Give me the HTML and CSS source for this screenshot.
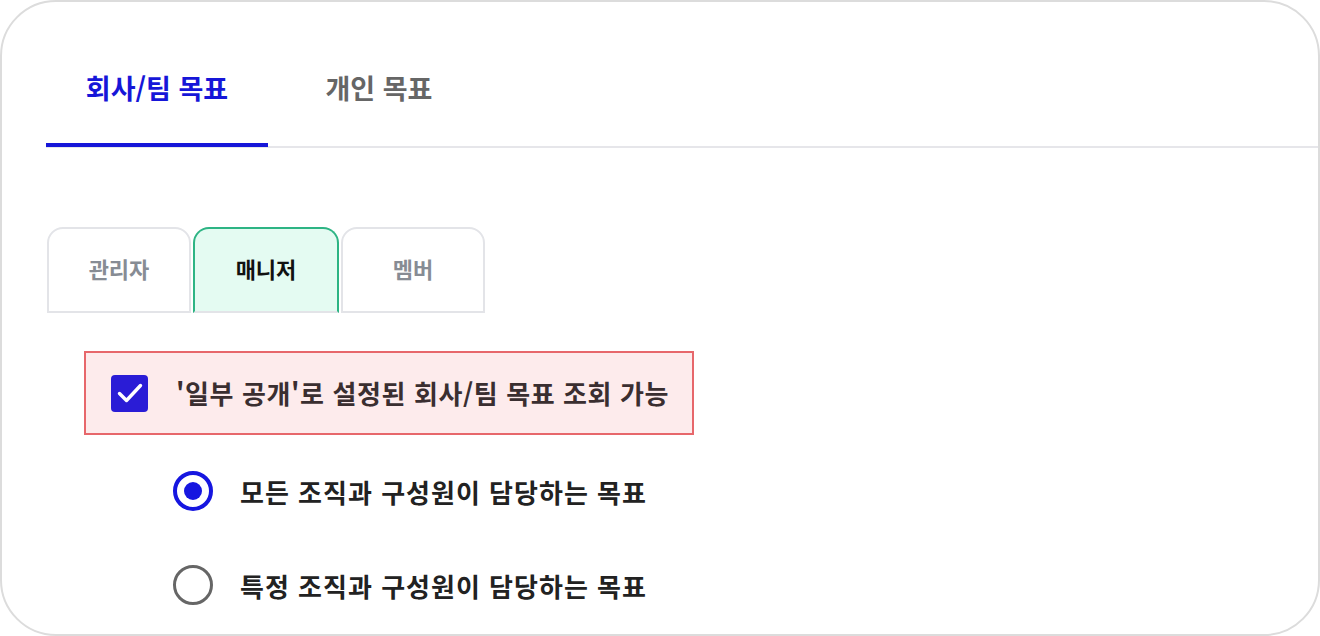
FILE: index.html
```html
<!DOCTYPE html>
<html lang="ko">
<head>
    <meta charset="UTF-8">
    <meta name="viewport" content="width=device-width, initial-scale=1.0">
    <title>목표 권한</title>
    <link rel="stylesheet" href="styles.css">
</head>
<body>
    <div class="card">
        <nav class="tabs">
            <a class="tab active">회사/팀 목표</a>
            <a class="tab">개인 목표</a>
        </nav>

        <div class="roles">
            <button class="role">관리자</button>
            <button class="role selected">매니저</button>
            <button class="role">멤버</button>
        </div>

        <label class="check-row">
            <span class="checkbox">
                <svg width="28" height="22" viewBox="0 0 28 22"><path d="M3.5 11.5 L10.5 18.5 L24.5 3.5" fill="none" stroke="#fff" stroke-width="3.4" stroke-linecap="round" stroke-linejoin="round"/></svg>
            </span>
            <span class="check-label">'일부 공개'로 설정된 회사/팀 목표 조회 가능</span>
        </label>

        <ul class="options">
            <li class="option"><span class="radio on"></span>모든 조직과 구성원이 담당하는 목표</li>
            <li class="option"><span class="radio"></span>특정 조직과 구성원이 담당하는 목표</li>
        </ul>
    </div>
</body>
</html>
```

FILE: styles.css
```css
html, body
{
    margin: 0;
    padding: 0;
    background: #fff;
}

body
{
    font-family: "Noto Sans CJK KR", "Noto Sans", sans-serif;
}

.card
{
    box-sizing: border-box;
    width: 1320px;
    height: 636px;
    border: 2px solid #dcdcdc;
    border-radius: 56px;
    padding: 58px 0 0 44px;
    overflow: hidden;
}

.tabs
{
    display: flex;
    border-bottom: 2px solid #e6e6ea;
    height: 86px;
}

.tab
{
    display: block;
    box-sizing: border-box;
    width: 222px;
    text-align: center;
    font-size: 27px;
    font-weight: 700;
    color: #666;
    line-height: 56px;
}

.tab.active
{
    color: #1616d8;
    border-bottom: 4px solid #1616d8;
    margin-bottom: -1px;
}

.roles
{
    display: flex;
    gap: 2px;
    margin-top: 79px;
    margin-left: 1px;
}

.role
{
    box-sizing: border-box;
    width: 144px;
    height: 86px;
    border: 2px solid #e3e4e8;
    border-radius: 16px 16px 0 0;
    background: #fff;
    font-family: inherit;
    font-size: 22px;
    font-weight: 700;
    color: #878c94;
    padding: 0 0 4px;
}

.role.selected
{
    width: 146px;
    border-color: #2db484;
    border-bottom: 2px solid #e3e4e8;
    background: #e4fbf2;
    color: #111;
}

.check-row
{
    display: flex;
    align-items: center;
    box-sizing: border-box;
    width: 610px;
    height: 84px;
    margin: 38px 0 0 38px;
    padding-left: 25px;
    border: 2px solid #e7676b;
    background: #fdebec;
}

.checkbox
{
    display: flex;
    align-items: center;
    justify-content: center;
    width: 37px;
    height: 37px;
    border-radius: 4px;
    background: #2a1cd6;
}

.check-label
{
    margin-left: 28px;
    font-size: 26px;
    letter-spacing: 0.6px;
    font-weight: 700;
    color: #3a2e30;
    padding-bottom: 2px;
}

.options
{
    list-style: none;
    margin: 36px 0 0 127px;
    padding: 0;
}

.option
{
    display: flex;
    align-items: center;
    height: 40px;
    margin-bottom: 54px;
    font-size: 26px;
    letter-spacing: 1px;
    font-weight: 700;
    color: #222;
}

.radio
{
    box-sizing: border-box;
    width: 40px;
    height: 40px;
    border: 3px solid #666;
    border-radius: 50%;
    margin-right: 27px;
    position: relative;
}

.radio.on
{
    border: 4px solid #1616e0;
}

.radio.on::after
{
    content: "";
    position: absolute;
    left: 7px;
    top: 7px;
    width: 18px;
    height: 18px;
    border-radius: 50%;
    background: #1616e0;
}
```
